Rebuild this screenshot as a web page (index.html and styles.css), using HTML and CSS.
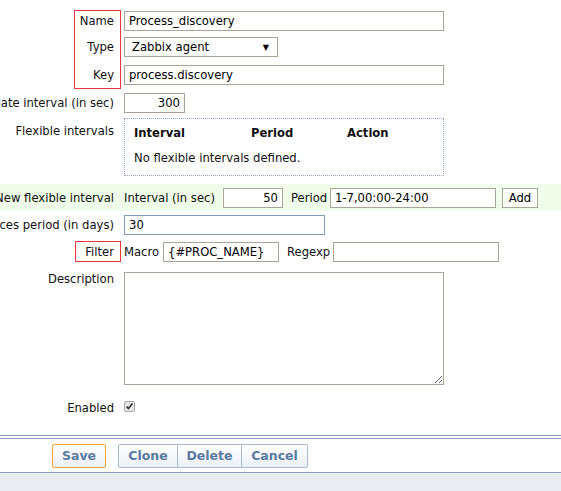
FILE: index.html
```html
<!DOCTYPE html>
<html>
<head>
<meta charset="utf-8">
<link rel="stylesheet" href="styles.css">
</head>
<body>
<div class="page">
  <form class="form">
    <div class="row r-name">
      <div class="label">Name</div>
      <div class="field"><input class="txt w320" type="text" value="Process_discovery"></div>
    </div>
    <div class="row r-type">
      <div class="label">Type</div>
      <div class="field">
        <div class="select"><span class="sel-text">Zabbix agent</span><span class="sel-arrow">▼</span></div>
      </div>
    </div>
    <div class="row r-key">
      <div class="label">Key</div>
      <div class="field"><input class="txt w320" type="text" value="process.discovery"></div>
    </div>
    <div class="row r-upd">
      <div class="label">Update interval (in sec)</div>
      <div class="field"><input class="txt num w60" type="text" value="300"></div>
    </div>
    <div class="row r-flex">
      <div class="label">Flexible intervals</div>
      <div class="field">
        <div class="flexbox">
          <div class="fl-head"><span class="c1">Interval</span><span class="c2">Period</span><span class="c3">Action</span></div>
          <div class="fl-empty">No flexible intervals defined.</div>
        </div>
      </div>
    </div>
    <div class="row r-new">
      <div class="label">New flexible interval</div>
      <div class="field inline">
        <span class="lbl l-int">Interval (in sec)</span>
        <input class="txt num w60 i-int" type="text" value="50">
        <span class="lbl l-per">Period</span>
        <input class="txt w166 i-per" type="text" value="1-7,00:00-24:00">
        <button type="button" class="add">Add</button>
      </div>
    </div>
    <div class="row r-keep">
      <div class="label">Keep lost resources period (in days)</div>
      <div class="field"><input class="txt focus w200" type="text" value="30"></div>
    </div>
    <div class="row r-filter">
      <div class="label">Filter</div>
      <div class="field inline">
        <span class="lbl l-mac">Macro</span>
        <input class="txt w116 i-mac" type="text" value="{#PROC_NAME}">
        <span class="lbl l-reg">Regexp</span>
        <input class="txt w166 i-reg" type="text" value="">
      </div>
    </div>
    <div class="row r-desc">
      <div class="label">Description</div>
      <div class="field"><textarea class="area"></textarea></div>
    </div>
    <div class="row r-en">
      <div class="label">Enabled</div>
      <div class="field">
        <span class="check"><svg width="11" height="11" viewBox="0 0 11 11"><rect x="0.5" y="0.5" width="10" height="10" rx="1.5" fill="#e6e6e6" stroke="#a8a8a8"/><path d="M2.6 5.6 L4.4 7.6 L8.4 2.6" fill="none" stroke="#333" stroke-width="1.6"/></svg></span>
      </div>
    </div>
  </form>
  <div class="footer">
    <div class="buttons">
      <button type="button" class="btn main">Save</button>
      <div class="group">
        <button type="button" class="btn">Clone</button><button type="button" class="btn">Delete</button><button type="button" class="btn">Cancel</button>
      </div>
    </div>
  </div>
  <div class="bottom"></div>
  <div class="mark mark1"></div>
  <div class="mark mark2"></div>
</div>
</body>
</html>
```
FILE: styles.css
```css
* { box-sizing: border-box; }
html, body { margin: 0; padding: 0; background: #fff; }
body {
  font-family: "DejaVu Sans", Tahoma, sans-serif;
  font-size: 11.6px;
  color: #111;
  width: 561px;
  height: 491px;
  overflow: hidden;
}
.page { position: relative; height: 491px; }
.form { padding-top: 8px; }
.row { display: flex; align-items: center; column-gap: 10px; }
.label { width: 114px; flex: none; text-align: right; white-space: nowrap; direction: rtl; overflow: hidden; }
.field { flex: 1; display: flex; align-items: center; }

.r-name { height: 26px; }
.r-type { height: 26px; }
.r-key { height: 29px; }
.r-upd { height: 28px; }
.r-flex { align-items: flex-start; padding-top: 1px; height: 67px; }
.r-flex .label { padding-top: 6px; }
.r-new { height: 27px; background: #effdea; }
.r-keep { height: 27px; }
.r-filter { height: 27px; }
.r-desc { align-items: flex-start; padding-top: 7px; height: 128px; }
.r-en { height: 29px; }

.txt {
  font-family: "DejaVu Sans", Tahoma, sans-serif;
  font-size: 11.6px;
  color: #000;
  height: 20px;
  border: 1px solid #aaa697;
  padding: 0 4px;
  margin: 0;
  background: #fff;
  outline: none;
}
.num { text-align: right; }
.focus { border-color: #7f9db9; }
.w320 { width: 320px; }
.w60 { width: 61px; }
.w200 { width: 201px; }
.w166 { width: 166px; }
.w116 { width: 116px; }

.l-int { width: 96px; }
.i-int { width: 60px; margin-left: 3px; }
.l-per { margin-left: 8px; width: 34px; }
.i-per { margin-left: 5px; }
.add { margin-left: 6px; }
.l-mac { width: 36px; }
.i-mac { margin-left: 3px; }
.l-reg { margin-left: 8px; width: 42px; }
.i-reg { margin-left: 4px; }

.select {
  width: 154px; height: 20px;
  border: 1px solid #aaa697;
  display: flex; align-items: center; justify-content: space-between;
  padding: 0 8px 0 7px;
}
.sel-text { color: #000; }
.sel-arrow { font-size: 8px; color: #000; }

.flexbox {
  width: 320px; height: 58px;
  border: 1px dotted #97a3cf;
  padding: 0 9px;
}
.fl-head { display: flex; font-weight: bold; height: 25px; align-items: center; margin-top: 1px; }
.fl-head .c1 { width: 117px; }
.fl-head .c2 { width: 96px; }
.fl-empty { height: 25px; display: flex; align-items: center; }

.add {
  font-family: "DejaVu Sans", Tahoma, sans-serif;
  font-size: 11.6px;
  height: 20px; width: 36px;
  border: 1px solid #aaa697;
  background: #fff;
  padding: 0;
  color: #000;
}

.area {
  width: 320px; height: 113px;
  border: 1px solid #aaa697;
  margin: 0; resize: both;
}
.check { display: inline-flex; margin-top: -2px; }

.footer {
  margin-top: 13px;
  border-top: 1px solid #8da1b8;
  border-bottom: 1px solid #8da1b8;
  padding-top: 2px;
}
.buttons {
  border-top: 1px solid #8da1b8;
  height: 34px;
  display: flex; align-items: center;
  padding-left: 52px;
  column-gap: 12px;
}
.btn {
  font-family: "DejaVu Sans", Tahoma, sans-serif;
  font-size: 12.5px; font-weight: bold;
  color: #5b7aa0;
  height: 24px;
  padding: 0;
  border: 1px solid #a9bbd1;
  border-radius: 2px;
  background: linear-gradient(#ffffff, #eaf0f6);
  margin: 0;
}
.btn.main { border-color: #f8a531; width: 54px; }
.group { display: flex; }
.group .btn { border-radius: 0; }
.group .btn + .btn { margin-left: -1px; }
.group .btn:first-child { width: 60px; border-radius: 2px 0 0 2px; }
.group .btn:nth-child(2) { width: 65px; }
.group .btn:nth-child(3) { width: 67px; border-radius: 0 2px 2px 0; }
.bottom { background: #e9edf1; height: 40px; }

.mark { position: absolute; border: 1px solid #e8383b; }
.mark1 { left: 74px; top: 10px; width: 47px; height: 79px; }
.mark2 { left: 75px; top: 241px; width: 46px; height: 21px; }
```
